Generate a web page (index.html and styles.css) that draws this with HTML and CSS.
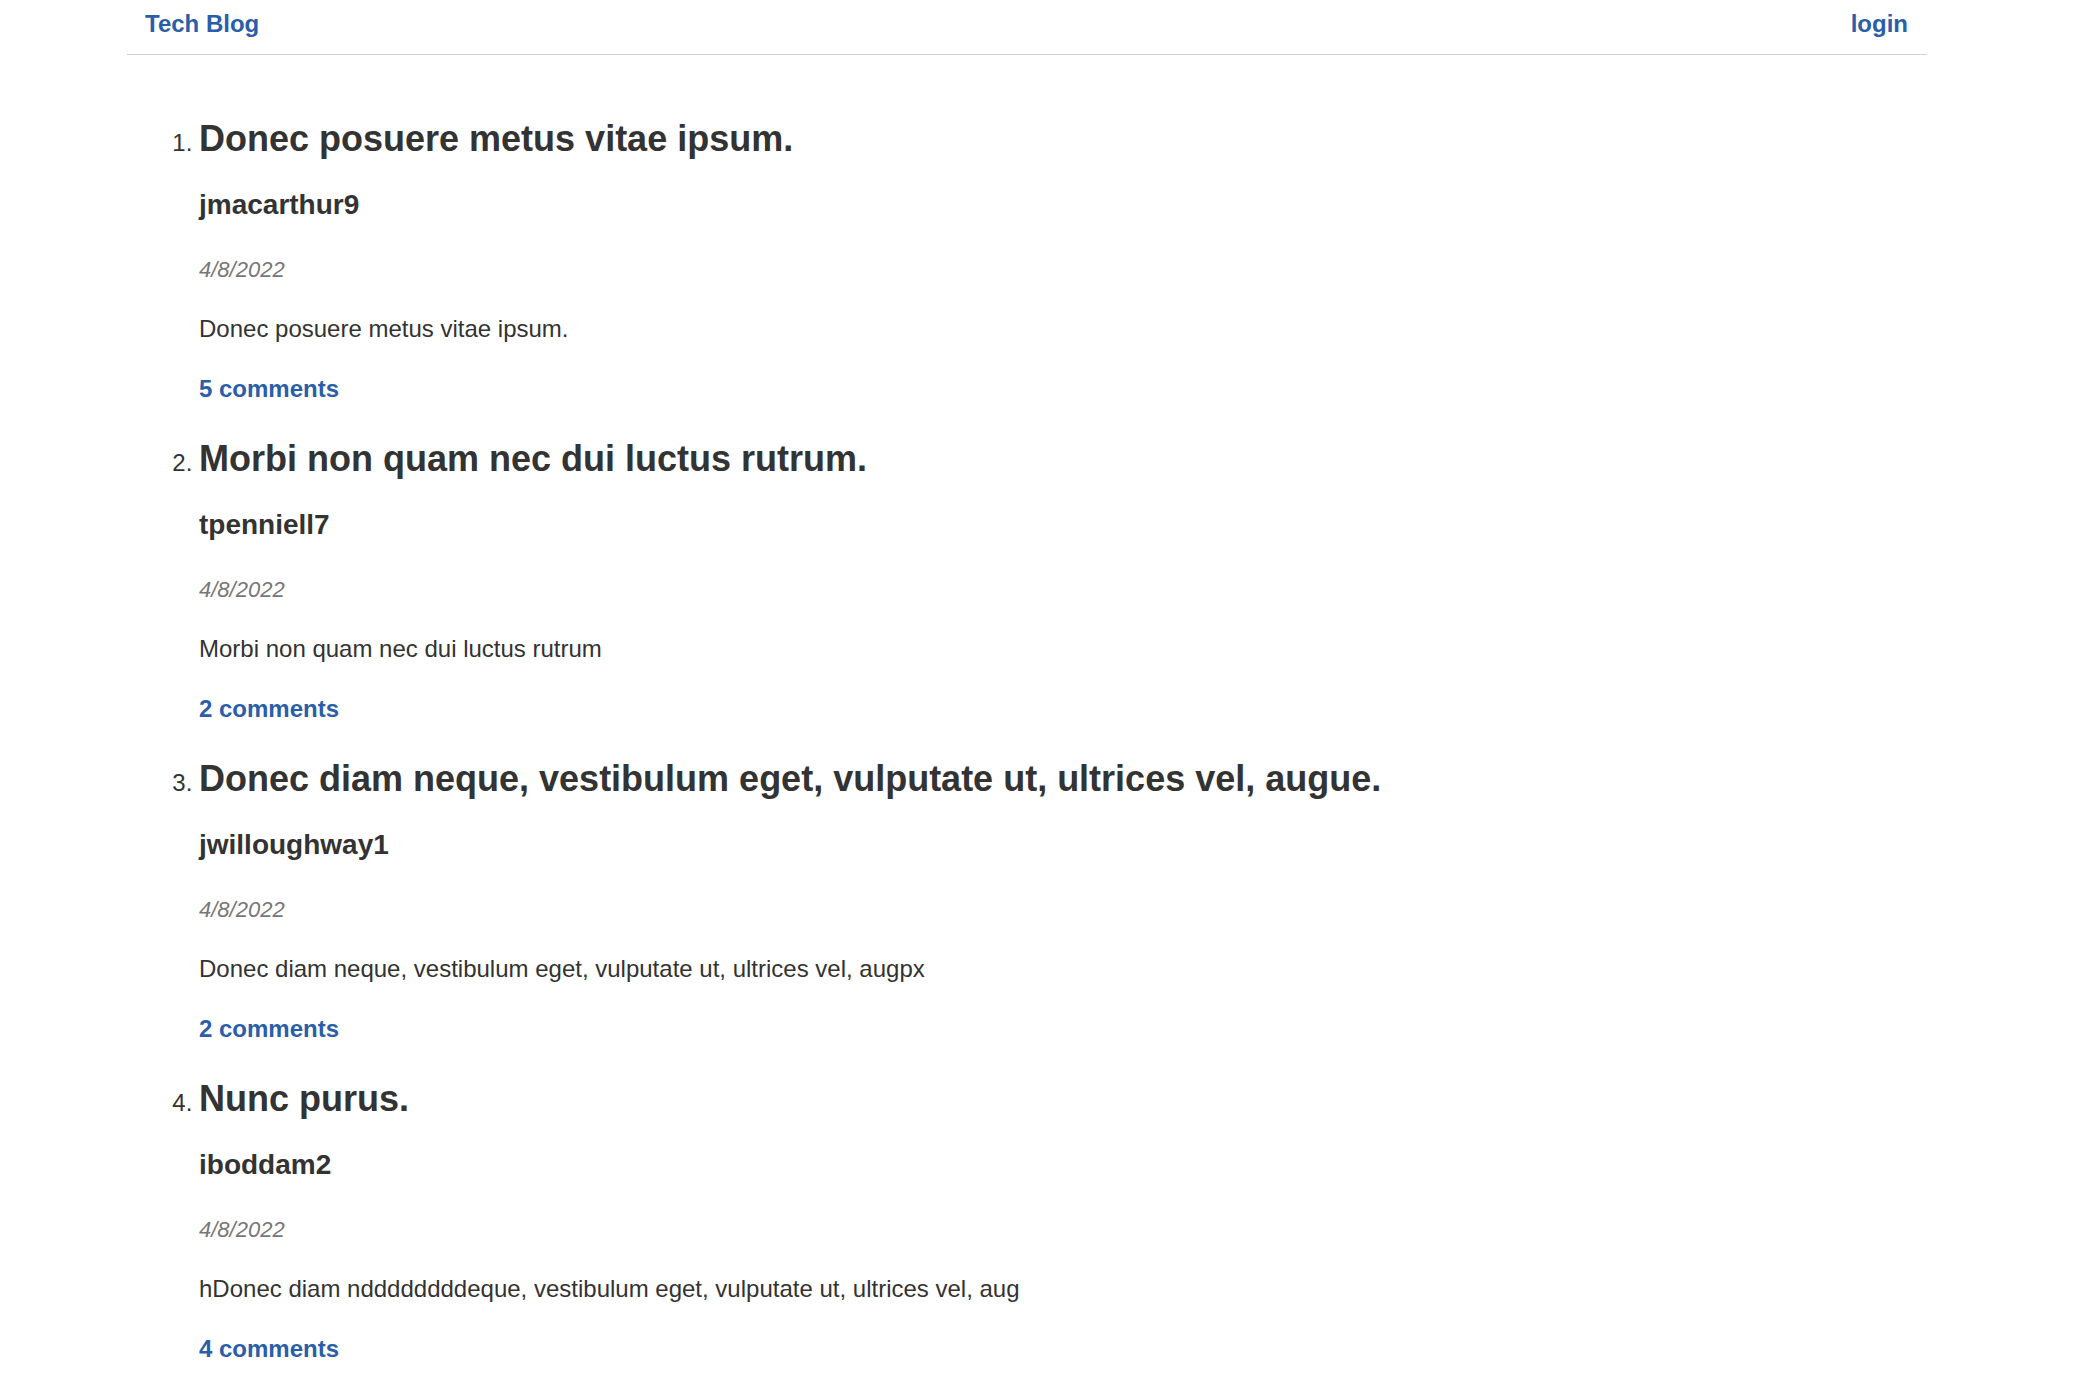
FILE: index.html
```html
<!DOCTYPE html>
<html lang="en">
<head>
<meta charset="utf-8">
<title>Tech Blog</title>
<link rel="stylesheet" href="styles.css">
</head>
<body>
<header class="site-header">
  <a class="brand" href="#">Tech Blog</a>
  <a class="nav-link" href="#">login</a>
</header>
<main class="main">
  <ol class="post-list">
    <li class="post">
      <h2 class="post-title">Donec posuere metus vitae ipsum.</h2>
      <h3 class="post-author">jmacarthur9</h3>
      <p class="post-date">4/8/2022</p>
      <p class="post-body">Donec posuere metus vitae ipsum.</p>
      <p class="post-comments"><a href="#">5 comments</a></p>
    </li>
    <li class="post">
      <h2 class="post-title">Morbi non quam nec dui luctus rutrum.</h2>
      <h3 class="post-author">tpenniell7</h3>
      <p class="post-date">4/8/2022</p>
      <p class="post-body">Morbi non quam nec dui luctus rutrum</p>
      <p class="post-comments"><a href="#">2 comments</a></p>
    </li>
    <li class="post">
      <h2 class="post-title">Donec diam neque, vestibulum eget, vulputate ut, ultrices vel, augue.</h2>
      <h3 class="post-author">jwilloughway1</h3>
      <p class="post-date">4/8/2022</p>
      <p class="post-body">Donec diam neque, vestibulum eget, vulputate ut, ultrices vel, augpx</p>
      <p class="post-comments"><a href="#">2 comments</a></p>
    </li>
    <li class="post">
      <h2 class="post-title">Nunc purus.</h2>
      <h3 class="post-author">iboddam2</h3>
      <p class="post-date">4/8/2022</p>
      <p class="post-body">hDonec diam nddddddddeque, vestibulum eget, vulputate ut, ultrices vel, aug</p>
      <p class="post-comments"><a href="#">4 comments</a></p>
    </li>
  </ol>
</main>
</body>
</html>
```
FILE: styles.css
```css
html, body {
  margin: 0;
  padding: 0;
  background: #ffffff;
}

body {
  font-family: "Liberation Sans", Arial, Helvetica, sans-serif;
  font-size: 24px;
  line-height: 36px;
  color: #333333;
}

a {
  color: #2b5ea8;
  text-decoration: none;
  font-weight: bold;
}

.site-header {
  width: 1800px;
  margin-left: 127px;
  box-sizing: border-box;
  display: flex;
  justify-content: space-between;
  align-items: flex-start;
  padding: 6px 19px 0 18px;
  height: 55px;
  border-bottom: 1px solid #d0d0d0;
}

.brand,
.nav-link {
  line-height: 36px;
}

.main {
  width: 1800px;
  margin-left: 127px;
}

.post-list {
  margin: 0;
  padding: 32px 0 0 72px;
}

.post-title {
  font-size: 36px;
  line-height: 43px;
  font-weight: bold;
  margin: 30px 0 24px;
  color: #333333;
}

.post-author {
  font-size: 28px;
  line-height: 42px;
  font-weight: bold;
  margin: 0 0 28px;
  color: #333333;
}

.post-date {
  font-size: 22px;
  line-height: 32px;
  font-style: italic;
  color: #777777;
  margin: 0 0 25px;
}

.post-body {
  margin: 0 0 24px;
}

.post-comments {
  margin: 0;
}
```
